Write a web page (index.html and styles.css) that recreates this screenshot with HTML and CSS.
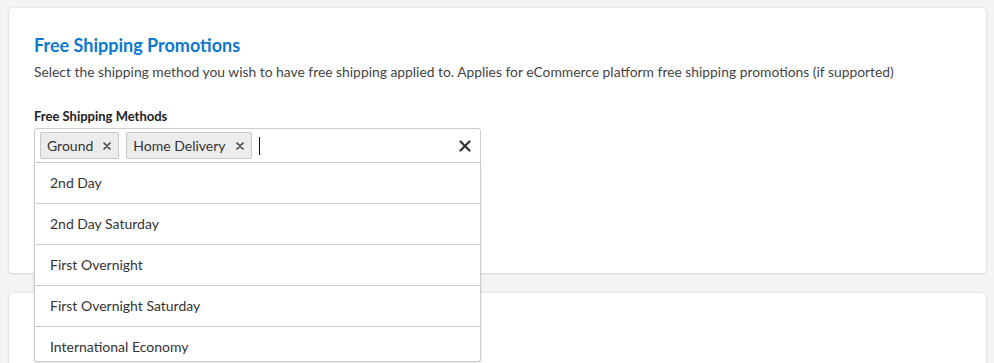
FILE: index.html
```html
<!DOCTYPE html>
<html>
<head>
    <meta charset="UTF-8">
    <title>Free Shipping Promotions</title>
    <link rel="stylesheet" href="styles.css">
</head>
<body>
    <div class="page">
        <div class="card">
            <h2 class="card-title">Free Shipping Promotions</h2>
            <p class="card-desc">Select the shipping method you wish to have free shipping applied to. Applies for eCommerce platform free shipping promotions (if supported)</p>

            <label class="field-label">Free Shipping Methods</label>
            <div class="select">
                <div class="select-control">
                    <span class="tag">Ground <svg class="tag-x" width="8" height="8" viewBox="0 0 8 8"><path d="M1 1 L7 7 M7 1 L1 7" stroke="#444" stroke-width="1.6" stroke-linecap="round"/></svg></span>
                    <span class="tag">Home Delivery <svg class="tag-x" width="8" height="8" viewBox="0 0 8 8"><path d="M1 1 L7 7 M7 1 L1 7" stroke="#444" stroke-width="1.6" stroke-linecap="round"/></svg></span>
                    <span class="cursor"></span>
                    <span class="clear">
                        <svg width="12" height="12" viewBox="0 0 12 12"><path d="M1.5 1.5 L10.5 10.5 M10.5 1.5 L1.5 10.5" stroke="#333" stroke-width="2.2" stroke-linecap="round"/></svg>
                    </span>
                </div>
                <ul class="select-menu">
                    <li>2nd Day</li>
                    <li>2nd Day Saturday</li>
                    <li>First Overnight</li>
                    <li>First Overnight Saturday</li>
                    <li>International Economy</li>
                </ul>
            </div>
        </div>
        <div class="card card-next"></div>
    </div>
</body>
</html>
```

FILE: styles.css
```css
body {
    margin: 0;
    background-color: #f4f4f4;
    font-family: Lato, "Open Sans", sans-serif;
    color: #333;
    overflow: hidden;
}
.page {
    padding: 8px 8px 0 9px;
    height: 363px;
    box-sizing: border-box;
    overflow: hidden;
}
.card {
    background-color: white;
    border-radius: 4px;
    box-shadow: 0 0 2px rgba(0, 0, 0, 0.18), 0 1px 2px rgba(0, 0, 0, 0.08);
    padding: 25px 25px 0 25px;
    height: 240px; /* 265 total */
}
.card-next {
    margin-top: 20px;
    height: 60px;
}
.card-title {
    margin: 0;
    font-size: 18px;
    font-weight: 700;
    color: #0b79d0;
    line-height: 24px;
}
.card-desc {
    margin: 6px 0 0 0;
    font-size: 13.85px;
    color: #444;
    line-height: 18px;
}
.field-label {
    display: block;
    margin-top: 26px;
    font-size: 13px;
    font-weight: 700;
    color: #222;
    line-height: 18px;
}
.select {
    position: relative;
    width: 447px;
    margin-top: 3px;
}
.select-control {
    display: flex;
    align-items: center;
    gap: 7px;
    height: 35px;
    box-sizing: border-box;
    border: 1px solid #ccc;
    border-radius: 3px 3px 0 0;
    padding: 0 5px;
    background-color: white;
}
.tag {
    display: flex;
    align-items: center;
    height: 27px;
    box-sizing: border-box;
    padding: 0 7px 0 6px;
    background-color: #ececec;
    border: 1px solid #c8c8c8;
    border-radius: 2px;
    font-size: 14px;
    color: #333;
}
.tag-x {
    margin-left: 10px;
}
.cursor {
    width: 1px;
    height: 18px;
    background-color: #111;
}
.clear {
    margin-left: auto;
    margin-right: 4px;
    display: flex;
}
.select-menu {
    position: absolute;
    top: 35px;
    left: 0;
    right: 0;
    max-height: 198px;
    overflow: hidden;
    margin: 0;
    padding: 0;
    list-style: none;
    background-color: white;
    border: 1px solid #ccc;
    border-top: none;
    border-radius: 0 0 3px 3px;
    box-shadow: 0 1px 3px rgba(0, 0, 0, 0.12);
    z-index: 2;
}
.select-menu li {
    height: 40px;
    line-height: 40px;
    padding-left: 15px;
    font-size: 14px;
    color: #333;
    border-bottom: 1px solid #ccc;
}
.select-menu li:last-child {
    border-bottom: none;
}
```
